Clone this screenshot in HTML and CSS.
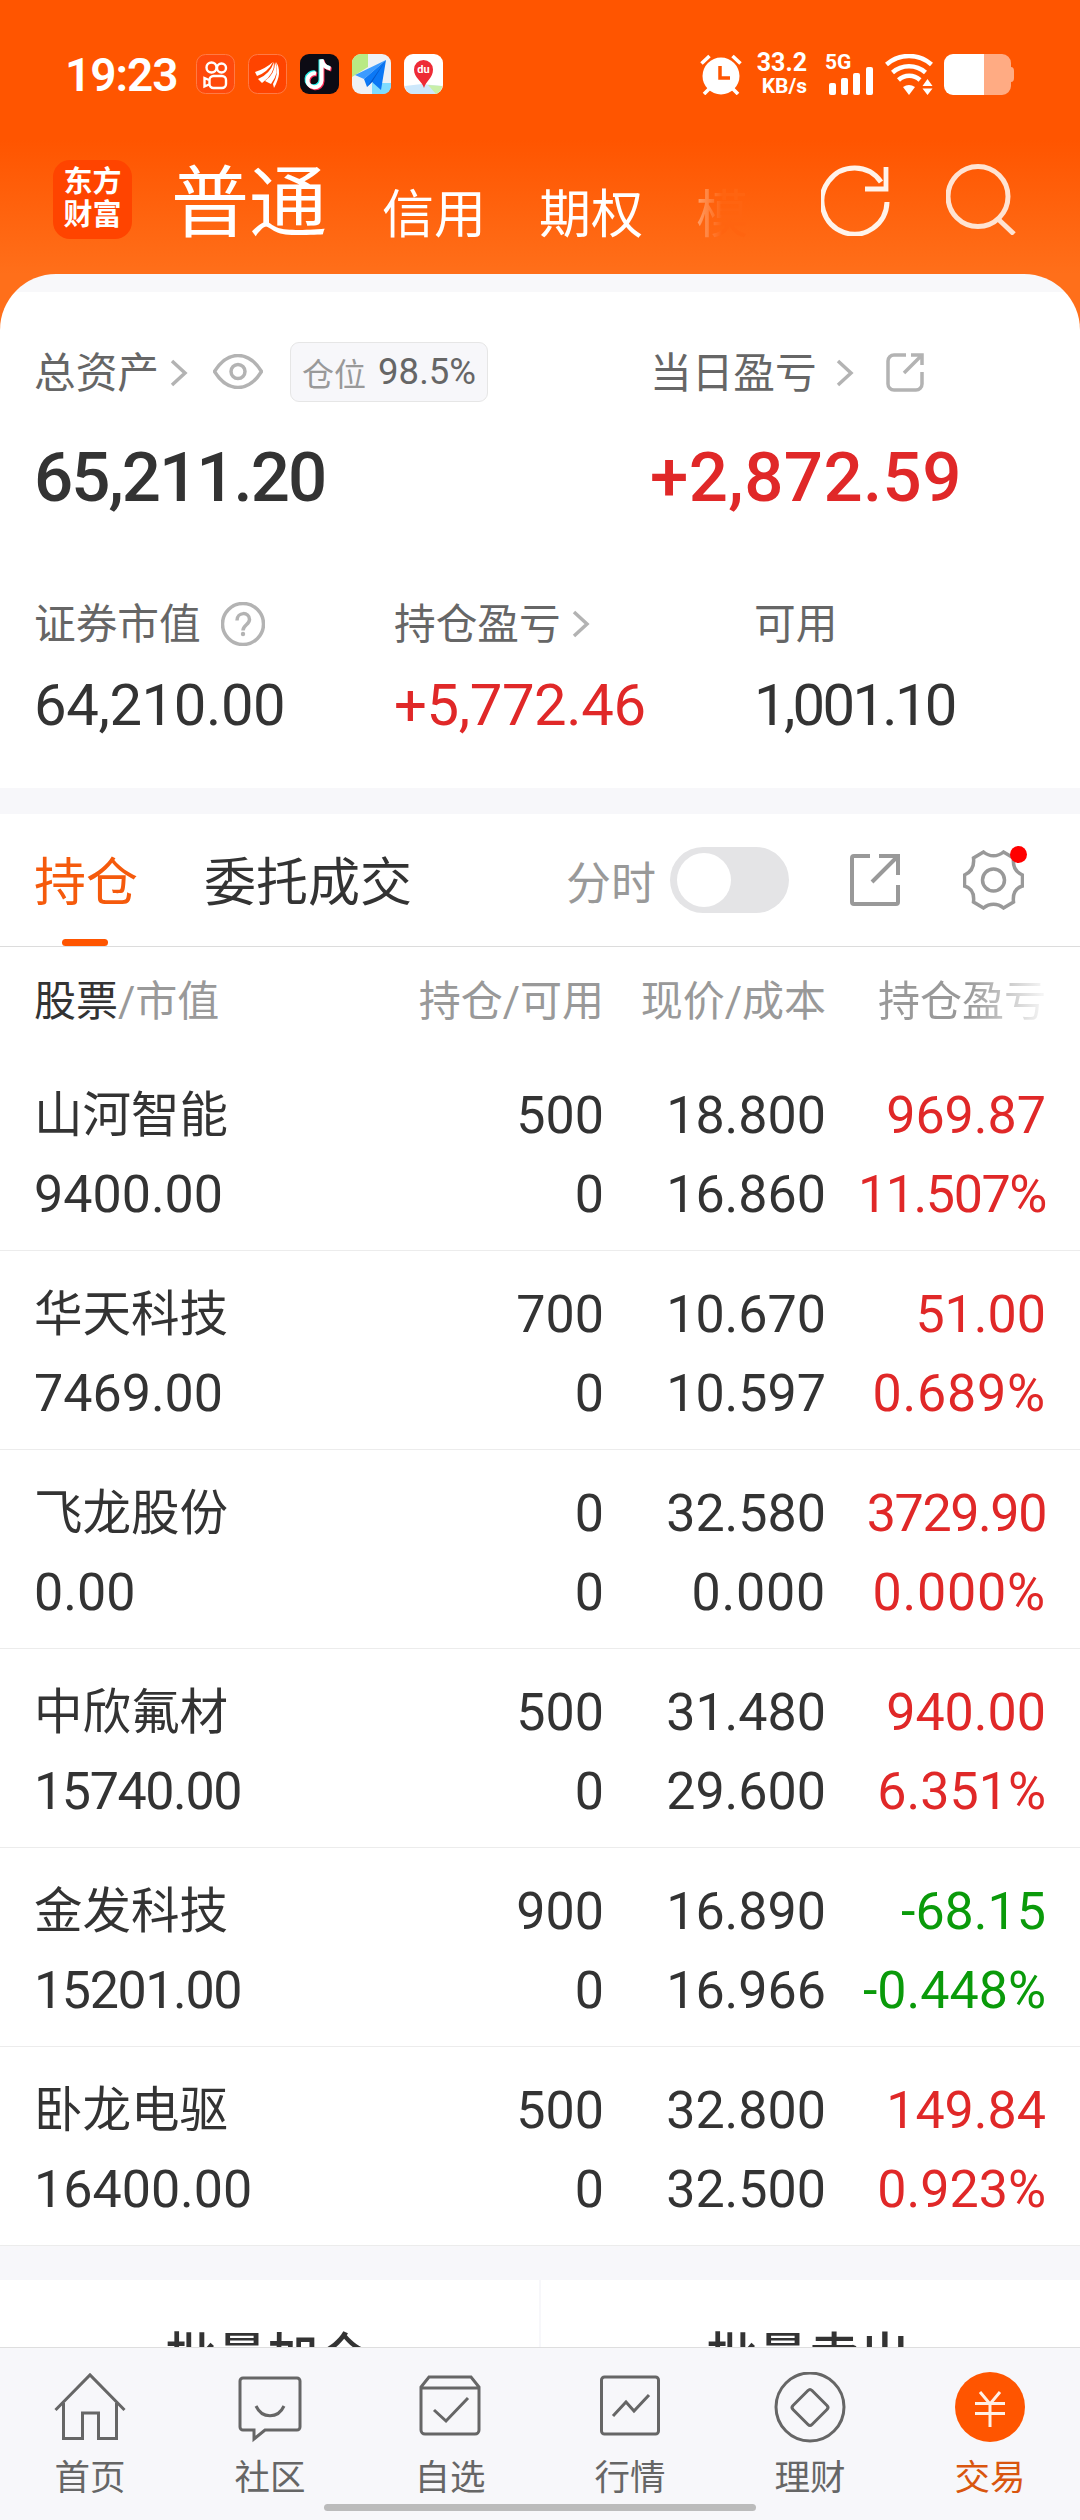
FILE: index.html
```html
<!DOCTYPE html>
<html lang="zh-CN">
<head>
  <meta charset="UTF-8">
  <meta name="viewport" content="width=device-width, initial-scale=1.0">
  <title>东方财富</title>
  <link rel="stylesheet" href="styles.css">
</head>
<body>
  <div class="top">
    <div class="statusbar">
      <span class="time">19:23</span>
      <div class="apps">
        <svg class="app" viewBox="0 0 39 40">
          <rect x=".5" y=".5" width="38" height="39" rx="9" fill="#ff4a0c" stroke="#ff7a45"/>
          <g fill="none" stroke="#fff" stroke-width="2.4"><circle cx="15.500" cy="13.500" r="5"/><circle cx="25.500" cy="14" r="4.500"/><rect x="13.500" y="22" width="16.500" height="12" rx="4"/><path d="M13 26l-4.500-2v8.500l4.500-2"/></g>
        </svg>
        <svg class="app" viewBox="0 0 39 40">
          <rect x=".5" y=".5" width="38" height="39" rx="9" fill="#ff4400" stroke="#ff7a45"/>
          <path d="M7 18Q17 15 25 8Q20 18 9 22ZM10 25Q22 20 26 8Q27 20 14 29ZM17 27Q27 20 27 8Q32 18 23 30ZM25 30Q31 20 28 8Q35 18 26 34Z" fill="#fff"/>
        </svg>
        <svg class="app" viewBox="0 0 39 40">
          <rect width="39" height="40" rx="9" fill="#0c0b14"/>
          <g fill="none" stroke-width="4"><path d="M15 18.500a7 7 0 1 0 5.500 7V5.500c1 5 4 8 9 8" stroke="#2af0ea"/><path d="M17 20.500a7 7 0 1 0 5.500 7V6.500c1 5 4 8 9 9" stroke="#fe2c55"/><path d="M16 19.500a7 7 0 1 0 5.500 7V5.500c1 5 4 8 9 9" stroke="#fff"/></g>
        </svg>
        <svg class="app" viewBox="0 0 39 40">
          <rect width="39" height="40" rx="9" fill="#eef1f5"/>
          <path d="M9 0h7v13L0 23V9a9 9 0 0 1 9-9z" fill="#b9ea84"/>
          <path d="M20 29h19v3a8 8 0 0 1-8 8H20z" fill="#7fdcff"/>
          <path d="M34 6L3 21l9 4z" fill="#3b9bff"/><path d="M34 6L12 25l3 8 5-5 9 8z" fill="#0b78f5"/><path d="M34 6L15 33l5-5z" fill="#0757c8"/>
        </svg>
        <svg class="app" viewBox="0 0 39 40">
          <rect width="39" height="40" rx="9" fill="#fff"/>
          <path d="M1 32l17-2 20 2v1a8 8 0 0 1-8 7H9a8 8 0 0 1-8-8z" fill="#cde8fb"/><path d="M24 31l14 1c0 4-3 7-6 8z" fill="#c9efa8"/>
          <path d="M20 34C18 27 10 24 10 15.500a9.500 9.500 0 0 1 19 0C29 24 22 27 20 34z" fill="#ee2b36"/>
          <text class="du" x="19.500" y="19" text-anchor="middle">du</text>
        </svg>
      </div>
      <div class="signals">
        <svg class="alarm" viewBox="0 0 42 41">
          <g stroke="#fff" stroke-width="3.600" fill="none"><path d="M1.500 9.500l8-7.500M40.500 9.500l-8-7.500M4 40l6-6M38 40l-6-6"/></g>
          <circle cx="21" cy="22" r="18.500" fill="#fff"/>
          <path d="M20 12v12h10" fill="none" stroke="#ff5500" stroke-width="3.500"/>
        </svg>
        <div class="speed"><span>33.2</span><span>KB/s</span></div>
        <div class="mobile">
          <span>5G</span>
          <svg viewBox="0 0 46 28"><g fill="#fff"><rect x="1" y="16" width="7" height="12" rx="2"/><rect x="13" y="11" width="7" height="17" rx="2"/><rect x="25" y="6" width="7" height="22" rx="2"/><rect x="38" y="0" width="7" height="28" rx="2"/></g></svg>
        </div>
        <svg class="wifi" viewBox="0 0 49 41">
          <g fill="none" stroke="#fff" stroke-width="4.500"><path d="M1.500 10.500a34 34 0 0 1 45 0"/><path d="M7.500 18.500a25 25 0 0 1 33 0"/><path d="M13.500 26a16 16 0 0 1 21.500 0"/></g>
          <path d="M18 33q6-4 12 0l-6 8zM37.500 32l5-7 5 7zM37.500 34.500l5 6.500 5-6.500z" fill="#fff"/>
        </svg>
        <svg class="battery" viewBox="0 0 70 41">
          <path d="M40 0h18a9 9 0 0 1 9 9v4q3 0 3 4v7q0 4-3 4v4a9 9 0 0 1-9 9H40z" fill="#ffab83"/>
          <path d="M9 0h31v41H9a9 9 0 0 1-9-9V9a9 9 0 0 1 9-9z" fill="#fff"/>
        </svg>
      </div>
    </div>

    <div class="titlebar">
      <div class="logo"><span>东方</span><span>财富</span></div>
      <span class="account current">普通</span>
      <span class="account credit">信用</span>
      <span class="account option">期权</span>
      <span class="account more">模</span>
      <svg class="refresh" viewBox="0 0 70 72">
        <path d="M66 38A32.500 33 0 1 1 60 18" fill="none" stroke="#fff3ea" stroke-width="5"/>
        <path d="M65 3v22H44" fill="none" stroke="#fff3ea" stroke-width="4.800"/>
      </svg>
      <svg class="search" viewBox="0 0 70 72">
        <circle cx="32" cy="33.500" r="30" fill="none" stroke="#ffe3d2" stroke-width="5"/>
        <path d="M52 56l16 15" stroke="#ffe3d2" stroke-width="5"/>
      </svg>
    </div>

    <div class="panel">
      <div class="totals">
        <div class="total">
          <div class="label"><span>总资产</span>
            <svg class="chevron" viewBox="0 0 18 28"><path d="M2 2l13 12L2 26"/></svg>
            <svg class="eye" viewBox="0 0 50 35"><path d="M1.500 17.500C8 7 16 1.500 25 1.500S42 7 48.500 17.500C42 28 34 33.500 25 33.500S8 28 1.500 17.500z"/><circle cx="25" cy="17.500" r="7"/></svg>
            <div class="chip">仓位 <b>98.5%</b></div>
          </div>
          <div class="amount tight">65,211.20</div>
        </div>
        <div class="total">
          <div class="label"><span>当日盈亏</span>
            <svg class="chevron day" viewBox="0 0 18 28"><path d="M2 2l13 12L2 26"/></svg>
            <svg class="share" viewBox="0 0 38 40"><path d="M20 3H8a6 6 0 0 0-6 6v23a6 6 0 0 0 6 6h22a6 6 0 0 0 6-6V20M25 3h11v10M36 3L18 21"/></svg>
          </div>
          <div class="amount up">+2,872.59</div>
        </div>
      </div>

      <div class="details">
        <div class="detail">
          <div class="label"><span>证券市值</span>
            <svg class="help" viewBox="0 0 44 44"><circle cx="22" cy="22" r="20.500"/><path d="M16 18.500c0-9 12.500-9 12.500-1 0 5-6.500 5.500-6.500 11"/><circle class="dot" cx="22" cy="32" r="2.200"/></svg>
          </div>
          <div class="value">64,210.00</div>
        </div>
        <div class="detail">
          <div class="label"><span>持仓盈亏</span>
            <svg class="chevron" viewBox="0 0 18 28"><path d="M2 2l13 12L2 26"/></svg>
          </div>
          <div class="value up">+5,772.46</div>
        </div>
        <div class="detail">
          <div class="label"><span>可用</span></div>
          <div class="value tight">1,001.10</div>
        </div>
      </div>
    </div>
  </div>

  <div class="tabs">
    <div class="tab active">持仓</div>
    <div class="tab">委托成交</div>
    <div class="tools">
      <span class="minute">分时</span>
      <span class="switch"></span>
      <svg class="export" viewBox="0 0 50 52"><path d="M20 2H4a2 2 0 0 0-2 2v44a2 2 0 0 0 2 2h42a2 2 0 0 0 2-2V31M29 2h19v19M48 2L22 28"/></svg>
      <div class="settings">
        <svg viewBox="0 0 60 60"><path d="M20 2C26 7 34 7 40 2L50 8C49 17 52 22 59 25V36C52 38 49 43 50 52L40 58C34 53 26 53 20 58L10 52C11 43 8 38 1 36V25C8 22 11 17 10 8Z"/><circle cx="30" cy="30" r="11"/></svg>
        <i class="badge"></i>
      </div>
    </div>
  </div>

  <div class="thead">
    <div><b>股票</b>/市值</div>
    <div>持仓/可用</div>
    <div>现价/成本</div>
    <div class="fade">持仓盈亏</div>
  </div>

  <div class="stocks">
    <div class="stock">
      <div>山河智能<br><span>9400.00</span></div>
      <div>500<br>0</div>
      <div>18.800<br>16.860</div>
      <div class="up">969.87<br><span class="tight">11.507%</span></div>
    </div>
    <div class="stock">
      <div>华天科技<br><span>7469.00</span></div>
      <div>700<br>0</div>
      <div>10.670<br>10.597</div>
      <div class="up">51.00<br><span class="wide">0.689%</span></div>
    </div>
    <div class="stock">
      <div>飞龙股份<br><span>0.00</span></div>
      <div>0<br>0</div>
      <div>32.580<br><span class="wide">0.000</span></div>
      <div class="up"><span class="tight">3729.90</span><br><span class="wide">0.000%</span></div>
    </div>
    <div class="stock">
      <div>中欣氟材<br><span class="tight">15740.00</span></div>
      <div>500<br>0</div>
      <div>31.480<br>29.600</div>
      <div class="up">940.00<br>6.351%</div>
    </div>
    <div class="stock">
      <div>金发科技<br><span class="tight">15201.00</span></div>
      <div>900<br>0</div>
      <div>16.890<br>16.966</div>
      <div class="down">-68.15<br>-0.448%</div>
    </div>
    <div class="stock">
      <div>卧龙电驱<br><span>16400.00</span></div>
      <div>500<br>0</div>
      <div>32.800<br>32.500</div>
      <div class="up">149.84<br>0.923%</div>
    </div>
  </div>

  <div class="batch">
    <div>批量加仓</div>
    <div>批量卖出</div>
  </div>

  <div class="nav">
    <div class="item">
      <svg viewBox="0 0 72 72"><path d="M1.500 38L36 3l34.500 35M9.500 31v35.500h19V41h16v25.500h18V31"/></svg>
      <span>首页</span>
    </div>
    <div class="item">
      <svg viewBox="0 0 72 72"><path d="M9 6h54a3 3 0 0 1 3 3v46a3 3 0 0 1-3 3H31L20 67V58H9a3 3 0 0 1-3-3V9a3 3 0 0 1 3-3zM22 34c6 13 22 13 28 0"/></svg>
      <span>社区</span>
    </div>
    <div class="item">
      <svg viewBox="0 0 72 72"><path d="M7 15v43a4 4 0 0 0 4 4h50a4 4 0 0 0 4-4V15L57 5H15zM7 16h58M20 38l12 11 22-23"/></svg>
      <span>自选</span>
    </div>
    <div class="item">
      <svg viewBox="0 0 72 72"><rect x="7.500" y="5" width="57" height="57" rx="3"/><path d="M19 44l13-14 8 9 15-16"/></svg>
      <span>行情</span>
    </div>
    <div class="item">
      <svg viewBox="0 0 72 72"><circle cx="36" cy="35" r="34"/><path d="M34 18.500q2-2 4 0l15 15q2 2 0 4l-15 15q-2 2-4 0l-15-15q-2-2 0-4z"/></svg>
      <span>理财</span>
    </div>
    <div class="item on">
      <svg viewBox="0 0 72 72"><circle cx="36" cy="35" r="35"/><path d="M26 20l10 12 10-12M21 31.500h30M21 41.500h30M36 32v23"/></svg>
      <span>交易</span>
    </div>
    <i class="homebar"></i>
  </div>
</body>
</html>
```

FILE: styles.css
```css
* {
  box-sizing: border-box;
}

body {
  margin: 0;
  height: 2520px;
  display: flex;
  flex-direction: column;
  overflow: hidden;
  background-color: #fff;
  color: #333;
  font-family: Roboto, "Noto Sans CJK SC", sans-serif;
}

svg {
  display: block;
  flex: none;
}

.up { color: #e02828; }
.down { color: #0a9a0a; }

/* header */
.top {
  height: 788px;
  background: linear-gradient(#ff5500 140px, #ff6f1a 274px);
}

.statusbar {
  height: 148px;
  padding: 54px 66px 0 65px;
  display: flex;
  color: #fff;
}

.time {
  width: 131px;
  font-size: 46px;
  font-weight: 600;
  line-height: 42px;
  letter-spacing: -1px;
}

.apps {
  display: flex;
  gap: 13px;
}

.app {
  width: 39px;
  height: 40px;
}

.du {
  font-size: 11px;
  font-weight: 700;
  fill: #fff;
}

.signals {
  margin-left: auto;
  display: flex;
}

.alarm {
  width: 42px;
  height: 41px;
}

.speed {
  width: 65px;
  height: 41px;
  margin-right: 21px;
  display: flex;
  flex-direction: column;
  align-items: flex-end;
  font-size: 25px;
  font-weight: 700;
  line-height: 17px;
  gap: 7px;
}

.speed span + span {
  font-size: 21px;
}

.mobile {
  width: 46px;
  margin-right: 11px;
  font-size: 21px;
  font-weight: 700;
  line-height: 14px;
}

.mobile span {
  display: block;
  margin-left: -3px;
  padding-top: 1px;
}

.mobile svg {
  width: 46px;
  height: 28px;
  margin-top: -2px;
}

.wifi {
  width: 49px;
  height: 41px;
  margin-right: 10px;
}

.battery {
  width: 70px;
  height: 41px;
}

.titlebar {
  height: 126px;
  padding: 12px 64px 0 53px;
  display: flex;
  color: #fff;
}

.logo {
  width: 79px;
  height: 79px;
  padding-top: 6px;
  display: flex;
  flex-direction: column;
  align-items: center;
  border-radius: 17px;
  background-color: #ff4400;
  font-size: 29px;
  font-weight: 700;
  line-height: 33px;
}

.account {
  font-size: 52px;
  line-height: 111px;
}

.current {
  width: 211px;
  margin-left: 39px;
  font-size: 78px;
  line-height: 89px;
}

.credit,
.option {
  width: 157px;
}

.more {
  width: 53px;
  background: linear-gradient(to right, #ffa06a, #ff6410 26px);
  background-clip: text;
  -webkit-background-clip: text;
  color: transparent;
}

.refresh {
  width: 70px;
  height: 72px;
  margin: 4px 0 0 auto;
}

.search {
  width: 70px;
  height: 72px;
  margin: 3px 0 0 55px;
}

.panel {
  height: 514px;
  padding: 67px 34px 0;
  border-radius: 56px 56px 0 0;
  background: linear-gradient(#f8f8fa 18px, #fff 18px);
}

.label {
  height: 63px;
  display: flex;
  align-items: center;
  font-size: 41.7px;
  color: #666;
}

.label span {
  margin-top: -5px;
}

.label svg {
  fill: none;
  stroke: #b3b3b3;
  stroke-width: 3.5;
}

.chevron {
  width: 18px;
  height: 28px;
  margin-left: 11px;
}

.chevron.day {
  margin-left: 19px;
}

.eye {
  width: 50px;
  height: 35px;
  margin: -3px 0 0 25px;
}

.chip {
  width: 198px;
  height: 60px;
  margin: -1px 0 0 27px;
  padding-bottom: 1px;
  display: flex;
  align-items: center;
  justify-content: center;
  gap: 12px;
  border: 1px solid #e6e6e6;
  border-radius: 9px;
  background-color: #f7f7fa;
  font-size: 32px;
  color: #999;
}

.chip b {
  font-size: 36.5px;
  font-weight: 400;
  color: #666;
}

.share {
  width: 38px;
  height: 40px;
  margin: -1px 0 0 32px;
}

.help {
  width: 44px;
  height: 44px;
  margin-left: 20px;
}

.label .dot {
  fill: #b3b3b3;
  stroke: none;
}

.totals {
  display: grid;
  grid-template-columns: 616px 1fr;
}

.amount {
  height: 188px;
  padding-top: 33px;
  font-size: 69px;
  font-weight: 500;
  line-height: 82px;
  letter-spacing: 0.4px;
}

.amount.tight {
  letter-spacing: -2px;
}

.details {
  display: grid;
  grid-template-columns: 360px 360px 1fr;
}

.value {
  font-size: 58px;
  line-height: 100px;
  letter-spacing: -0.4px;
}

.value.tight {
  letter-spacing: -2.7px;
}

/* tabs */
.tabs {
  height: 159px;
  padding: 0 56px 0 34px;
  display: flex;
  align-items: center;
  border-top: 26px solid #f7f7fa;
  border-bottom: 1px solid #dcdcdc;
  font-size: 52px;
}

.tab {
  height: 132px;
  margin-right: 66px;
  line-height: 139px;
  position: relative;
}

.tab.active {
  color: #f55a0c;
}

.tab.active::after {
  content: "";
  position: absolute;
  left: 28px;
  bottom: 0;
  width: 46px;
  height: 7px;
  border-radius: 4px;
  background-color: #ff5500;
}

.tools {
  margin-left: auto;
  display: flex;
  align-items: center;
}

.minute {
  width: 104px;
  font-size: 45px;
  color: #999;
}

.switch {
  width: 119px;
  height: 66px;
  padding: 6px 7px;
  border-radius: 33px;
  background-color: #e4e4e6;
}

.switch::before {
  content: "";
  display: block;
  width: 54px;
  height: 54px;
  border-radius: 50%;
  background-color: #fff;
}

.export {
  width: 50px;
  height: 52px;
  margin-left: 61px;
  fill: none;
  stroke: #999;
  stroke-width: 4;
}

.settings {
  position: relative;
  margin-left: 63px;
}

.settings svg {
  width: 61px;
  height: 60px;
  fill: none;
  stroke: #999;
  stroke-width: 3.5;
}

.badge {
  position: absolute;
  top: -4px;
  right: -3px;
  width: 17px;
  height: 17px;
  border-radius: 50%;
  background-color: #ff0000;
}

/* positions */
.thead,
.stock {
  padding: 0 34px 0 34px;
  display: grid;
  grid-template-columns: 1fr 222px 222px 220px;
}

.thead {
  height: 105px;
  font-size: 42px;
  line-height: 110px;
  color: #999;
}

.thead b {
  font-weight: 400;
  color: #333;
}

.thead div + div,
.stock div + div {
  text-align: right;
  white-space: nowrap;
}

.thead .fade {
  background: linear-gradient(to right, #999 65%, #f4f4f4 98%);
  background-clip: text;
  -webkit-background-clip: text;
  color: transparent;
}

.stock {
  height: 199px;
  padding-top: 24px;
  border-bottom: 1px solid #ececec;
  font-size: 52px;
  line-height: 79px;
}

.stock div:first-child {
  font-size: 48.5px;
}

.stock div:first-child span {
  font-size: 52px;
}

.stock .tight {
  letter-spacing: -1.4px;
}

.stock .wide {
  letter-spacing: 0.8px;
}

/* batch buttons */
.batch {
  height: 101px;
  display: flex;
  border-top: 34px solid #f7f7fa;
  overflow: hidden;
}

.batch div {
  flex: 1;
  padding: 38px 4px 0 0;
  text-align: center;
  font-size: 51px;
  font-weight: 500;
  line-height: 80px;
}

.batch div + div {
  border-left: 2px solid #f7f7fa;
}

/* bottom nav */
.nav {
  height: 173px;
  position: relative;
  display: flex;
  border-top: 1px solid #dedede;
  background-color: #f7f7fa;
}

.item {
  flex: 1;
  padding-top: 24px;
  display: flex;
  flex-direction: column;
  align-items: center;
  font-size: 35.5px;
  line-height: 68px;
  color: #666;
}

.item svg {
  width: 72px;
  height: 72px;
  fill: none;
  stroke: #666;
  stroke-width: 3;
}

.item.on {
  color: #d9560f;
}

.item.on svg {
  stroke: #fff0e5;
}

.item.on circle {
  fill: #ff5500;
  stroke: none;
}

.homebar {
  position: absolute;
  left: 324px;
  bottom: 9px;
  width: 432px;
  height: 7px;
  border-radius: 4px;
  background-color: #bbb;
}
```
